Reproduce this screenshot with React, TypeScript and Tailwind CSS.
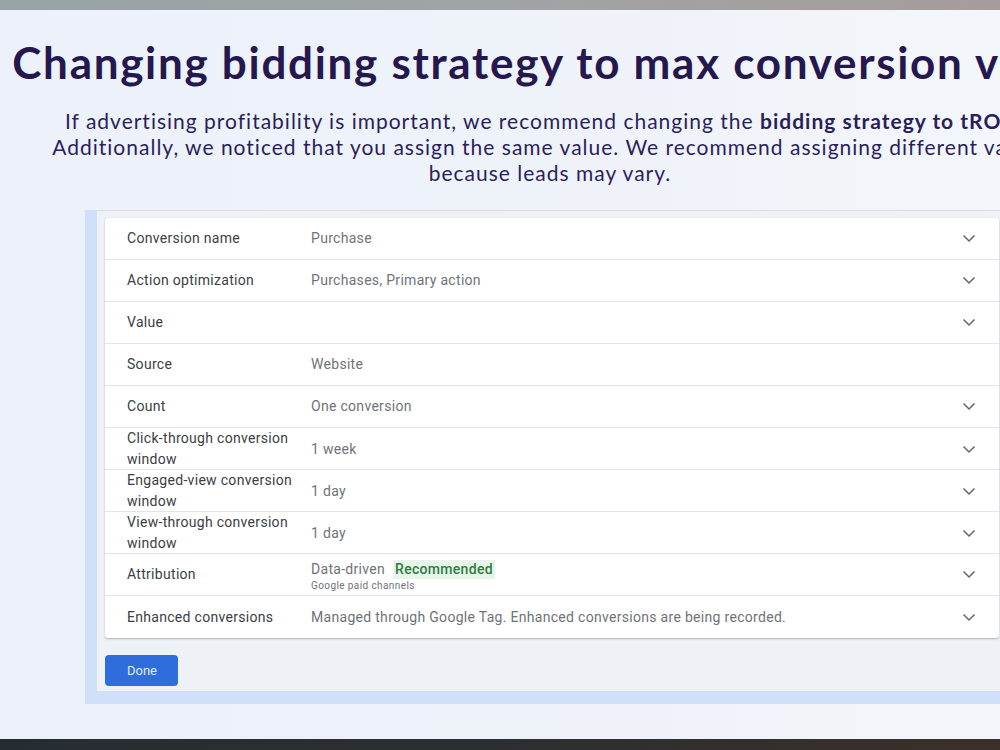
type Row = {
  label: string;
  value?: string;
  chevron?: boolean;
  attribution?: boolean;
};

const rows: Row[] = [
  { label: "Conversion name", value: "Purchase", chevron: true },
  { label: "Action optimization", value: "Purchases, Primary action", chevron: true },
  { label: "Value", value: "", chevron: true },
  { label: "Source", value: "Website", chevron: false },
  { label: "Count", value: "One conversion", chevron: true },
  { label: "Click-through conversion window", value: "1 week", chevron: true },
  { label: "Engaged-view conversion window", value: "1 day", chevron: true },
  { label: "View-through conversion window", value: "1 day", chevron: true },
  { label: "Attribution", attribution: true, chevron: true },
  {
    label: "Enhanced conversions",
    value: "Managed through Google Tag. Enhanced conversions are being recorded.",
    chevron: true,
  },
];

function Chevron() {
  return (
    <svg width="14" height="9" viewBox="0 0 14 9" fill="none">
      <path d="M1.5 1.5l5.5 5.5 5.5-5.5" stroke="#62666a" strokeWidth="1.5" />
    </svg>
  );
}

export default function App() {
  return (
    <div className="relative flex h-[750px] w-[1000px] flex-col overflow-hidden bg-gradient-to-r from-[#edf1f9] via-[#eef2f9] to-[#f3f6fa] font-['Lato',sans-serif]">
      {/* top strip */}
      <div className="h-[10px] shrink-0 bg-gradient-to-r from-[#97a3a5] via-[#a0a4a6] to-[#a69c9b]" />

      {/* heading */}
      <div className="w-[1100px] shrink-0 text-center text-[#24184f]">
        <h1 className="mt-[26px] whitespace-nowrap text-[44px] font-bold leading-[52px] tracking-[1.7px]">
          Changing bidding strategy to max conversion value
        </h1>
        <p className="mt-[20px] whitespace-nowrap text-[21px] leading-[26px] tracking-[1px] text-[#2a1f5c]">
          If advertising profitability is important, we recommend changing the{" "}
          <b>bidding strategy to tROAS.</b>
          <br />
          Additionally, we noticed that you assign the same value. We recommend assigning different values
          <br />
          because leads may vary.
        </p>
      </div>

      {/* panel */}
      <div className="ml-[85px] mt-[49px] flex-1">
        <div className="bg-[#cfe0f8] pb-[13px] pl-[12px]">
          <div className="-mt-[25px] border-t border-[#d9dde2] bg-[#eef1f5] pb-[5px] pl-[8px] pt-[7px] font-['Roboto',sans-serif]">
            <div className="w-[894px] rounded-[3px] bg-white shadow-[0_1px_2px_rgba(60,64,67,0.35)]">
              {rows.map((row, i) => (
                <div
                  key={row.label}
                  className={`grid h-[42px] grid-cols-[184px_1fr_60px] items-center pl-[22px] tracking-[0.3px] ${
                    i < rows.length - 1 ? "border-b border-[#e4e4e4]" : ""
                  }`}
                >
                  <div className="w-[178px] text-[14px] leading-[21px] text-[#3c4043]">{row.label}</div>
                  <div className="text-[14px] text-[#6f7378]">
                    {row.attribution ? (
                      <div className="flex flex-col pt-[4px]">
                        <div className="flex items-center gap-[8px] leading-[19px]">
                          <span>Data-driven</span>
                          <span className="bg-[#e6f4ea] px-[2px] font-medium text-[#2e7d3e]">
                            Recommended
                          </span>
                        </div>
                        <span className="text-[10px] leading-[14px] tracking-[0.4px] text-[#6f7378]">
                          Google paid channels
                        </span>
                      </div>
                    ) : (
                      row.value
                    )}
                  </div>
                  <div className="flex justify-center">{row.chevron && <Chevron />}</div>
                </div>
              ))}
            </div>
            <button className="mt-[17px] h-[31px] w-[73px] rounded-[4px] bg-[#2f6ddd] pl-[22px] text-left font-['Roboto',sans-serif] text-[13px] text-[#e3ebfb]">
              Done
            </button>
          </div>
        </div>
      </div>

      {/* bottom strip */}
      <div className="h-[11px] shrink-0 bg-gradient-to-r from-[#262d30] via-[#2c2f31] to-[#3b2f2a]" />
    </div>
  );
}
